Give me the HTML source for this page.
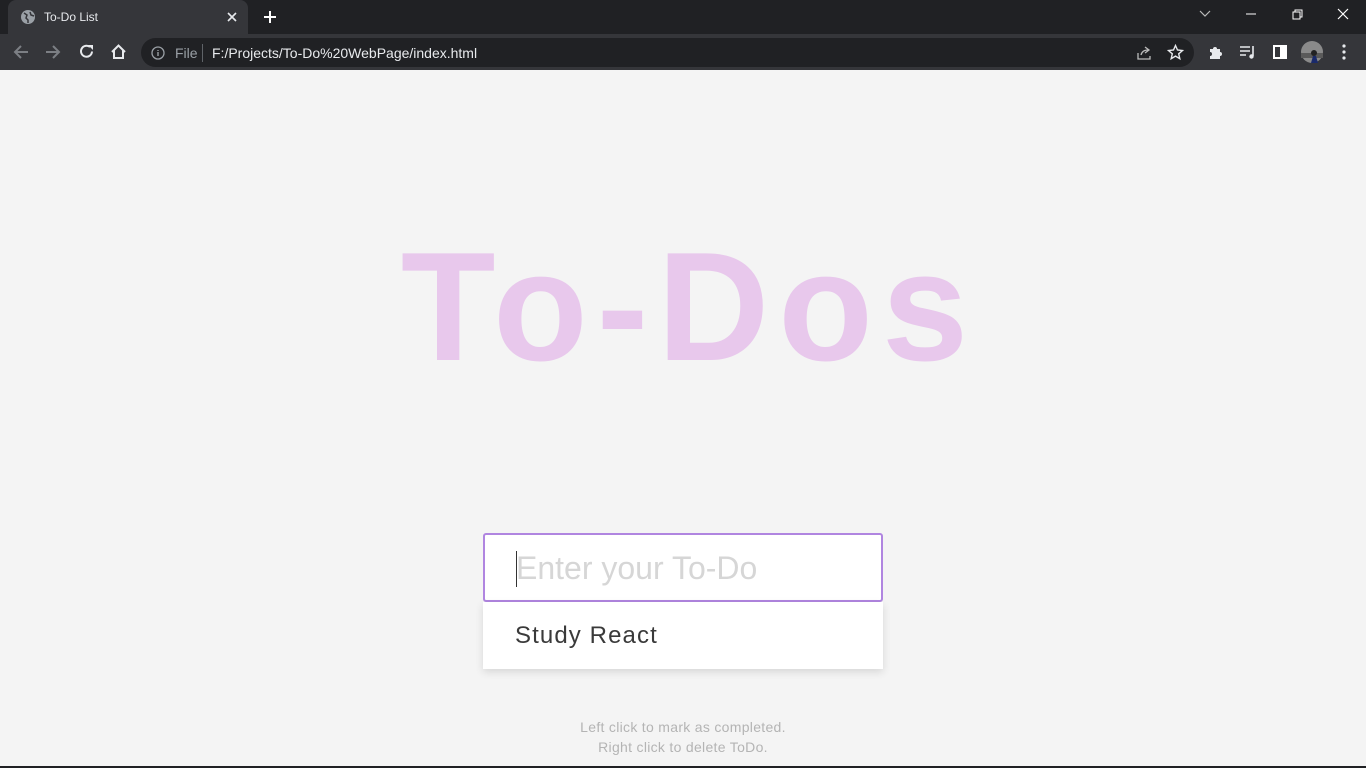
<!DOCTYPE html>
<html><head><meta charset="utf-8"><style>
*{margin:0;padding:0;box-sizing:border-box}
body{width:1366px;height:768px;overflow:hidden;background:#f4f4f4;font-family:"Liberation Sans",sans-serif;position:relative}
.tabbar{position:absolute;left:0;top:0;width:1366px;height:34px;background:#202124}
.tab{position:absolute;left:8px;top:0;width:240px;height:34px;background:#35363a;border-radius:8px 8px 0 0}
.tab .t{position:absolute;left:36px;top:10px;font-size:12px;color:#e8eaed}
.toolbar{position:absolute;left:0;top:34px;width:1366px;height:36px;background:#35363a}
.omni{position:absolute;left:141px;top:4px;width:1053px;height:29px;background:#202124;border-radius:15px}
.url{position:absolute;font-size:14px;color:#e8eaed}
.file{position:absolute;font-size:14px;color:#9aa0a6}
.sep{position:absolute;width:1px;height:18px;background:#5f6368}
.bot{position:absolute;left:0;top:766px;width:1366px;height:2px;background:#202124}
h1{position:absolute;left:6px;width:1366px;top:217px;text-align:center;font-size:155px;font-weight:bold;color:#e8c8ec;letter-spacing:9px;line-height:180px}
.inp{position:absolute;left:483px;top:533px;width:400px;height:69px;background:#fff;border:2px solid #b085e0;border-radius:3px}
.inp span{position:absolute;left:31px;top:15px;font-size:32px;color:#d6d6d6}
.caret{position:absolute;left:31px;top:16px;width:1px;height:36px;background:#333}
.item{position:absolute;left:483px;top:602px;width:400px;height:67px;background:#fff;box-shadow:0 3px 8px rgba(0,0,0,.12)}
.item span{position:absolute;left:32px;top:20px;font-size:24px;color:#3a3a3a;letter-spacing:1.1px}
.hint{position:absolute;left:0;width:1366px;top:717px;text-align:center;font-size:14px;line-height:20px;color:#b4b4b4;letter-spacing:.3px}
svg{position:absolute}
</style></head><body>
<div class="tabbar"><div class="tab">
<svg style="left:12px;top:9px" width="16" height="16" viewBox="0 0 16 16"><circle cx="8" cy="8" r="7" fill="#9aa0a6"/><path d="M4 4l3 2-1 3 2 2v3M10 3l1 3 3 1" stroke="#35363a" stroke-width="1.5" fill="none"/></svg>
<div class="t">To-Do List</div>
<svg style="left:219px;top:12px" width="10" height="10"><path d="M1 1l8 8M9 1l-8 8" stroke="#e8eaed" stroke-width="1.6"/></svg></div>
<svg style="left:263px;top:10px" width="14" height="14"><path d="M7 1v12M1 7h12" stroke="#fff" stroke-width="2"/></svg>
<svg style="left:1199px;top:10px" width="12" height="8"><path d="M1 1l5 5 5-5" stroke="#bbb" fill="none" stroke-width="1.2"/></svg>
<svg style="left:1246px;top:13px" width="10" height="2"><path d="M0 1h10" stroke="#fff"/></svg>
<svg style="left:1292px;top:9px" width="11" height="11"><rect x="1" y="3" width="7" height="7" stroke="#fff" fill="none"/><path d="M3 3V1h7v7H8" stroke="#fff" fill="none"/></svg>
<svg style="left:1337px;top:8px" width="12" height="12"><path d="M1 1l10 10M11 1L1 11" stroke="#fff" stroke-width="1.2"/></svg>
</div>
<div class="toolbar">
<svg style="left:13px;top:10px" width="16" height="16"><path d="M15 8H2M8 2L2 8l6 6" stroke="#7c7f84" stroke-width="2" fill="none"/></svg>
<svg style="left:45px;top:10px" width="16" height="16"><path d="M1 8h13M8 2l6 6-6 6" stroke="#7c7f84" stroke-width="2" fill="none"/></svg>
<svg style="left:78px;top:9px" width="17" height="17"><path d="M14 8.5A5.5 5.5 0 1 1 12 4" stroke="#e8eaed" stroke-width="2" fill="none"/><path d="M10 2h5v5z" fill="#e8eaed"/></svg>
<svg style="left:110px;top:9px" width="17" height="17"><path d="M2 9L8.5 2.5 15 9M4 7.5V15h9V7.5" stroke="#e8eaed" stroke-width="2" fill="none"/></svg>
<div class="omni">
<svg style="left:10px;top:8px" width="14" height="14"><circle cx="7" cy="7" r="6" stroke="#9aa0a6" fill="none" stroke-width="1.3"/><path d="M7 6v4M7 4v1" stroke="#9aa0a6" stroke-width="1.4"/></svg>
<div class="file" style="left:34px;top:7px">File</div><div class="sep" style="left:61px;top:6px"></div>
<div class="url" style="left:71px;top:7px">F:/Projects/To-Do%20WebPage/index.html</div>
<svg style="left:995px;top:7px" width="16" height="16"><path d="M2 8v6h12v-3M5 10c1-4 4-5 7-5M9 2l4 3-4 3" stroke="#bbb" fill="none" stroke-width="1.3"/></svg>
<svg style="left:1026px;top:6px" width="17" height="17"><path d="M8.5 1.5l2 4.5 5 .5-3.8 3.3 1.1 4.9-4.3-2.6-4.3 2.6 1.1-4.9L1.5 6.5l5-.5z" stroke="#e8eaed" fill="none" stroke-width="1.4"/></svg>
</div>
<svg style="left:1208px;top:10px" width="16" height="16"><path d="M2 5h3a2 2 0 0 1 4 0h3v3a2 2 0 0 1 0 4v3H2v-3a2 2 0 0 0 0-4z" fill="#e8eaed"/></svg>
<svg style="left:1239px;top:10px" width="18" height="16"><path d="M1 3h10M1 7h10M1 11h6M14 2v10" stroke="#e8eaed" stroke-width="1.6"/><circle cx="12.5" cy="12.5" r="2.2" fill="#e8eaed"/></svg>
<svg style="left:1273px;top:11px" width="14" height="14"><rect x="1" y="1" width="12" height="12" stroke="#fff" stroke-width="2" fill="none"/><rect x="7" y="1" width="6" height="12" fill="#fff"/></svg>
<svg style="left:1301px;top:7px" width="22" height="22"><circle cx="11" cy="11" r="11" fill="#8a8a8a"/><path d="M0 12h22v5H0z" fill="#5a5a5a"/><circle cx="13" cy="12" r="3" fill="#222"/><path d="M10 22l2-7h3l2 7z" fill="#1a2a6a"/></svg>
<svg style="left:1342px;top:10px" width="4" height="16"><circle cx="2" cy="2" r="1.6" fill="#e8eaed"/><circle cx="2" cy="8" r="1.6" fill="#e8eaed"/><circle cx="2" cy="14" r="1.6" fill="#e8eaed"/></svg>
</div>
<h1>To-Dos</h1>
<div class="inp"><span>Enter your To-Do</span><div class="caret"></div></div>
<div class="item"><span>Study React</span></div>
<div class="hint">Left click to mark as completed.<br>Right click to delete ToDo.</div>
<div class="bot"></div>
</body></html>
